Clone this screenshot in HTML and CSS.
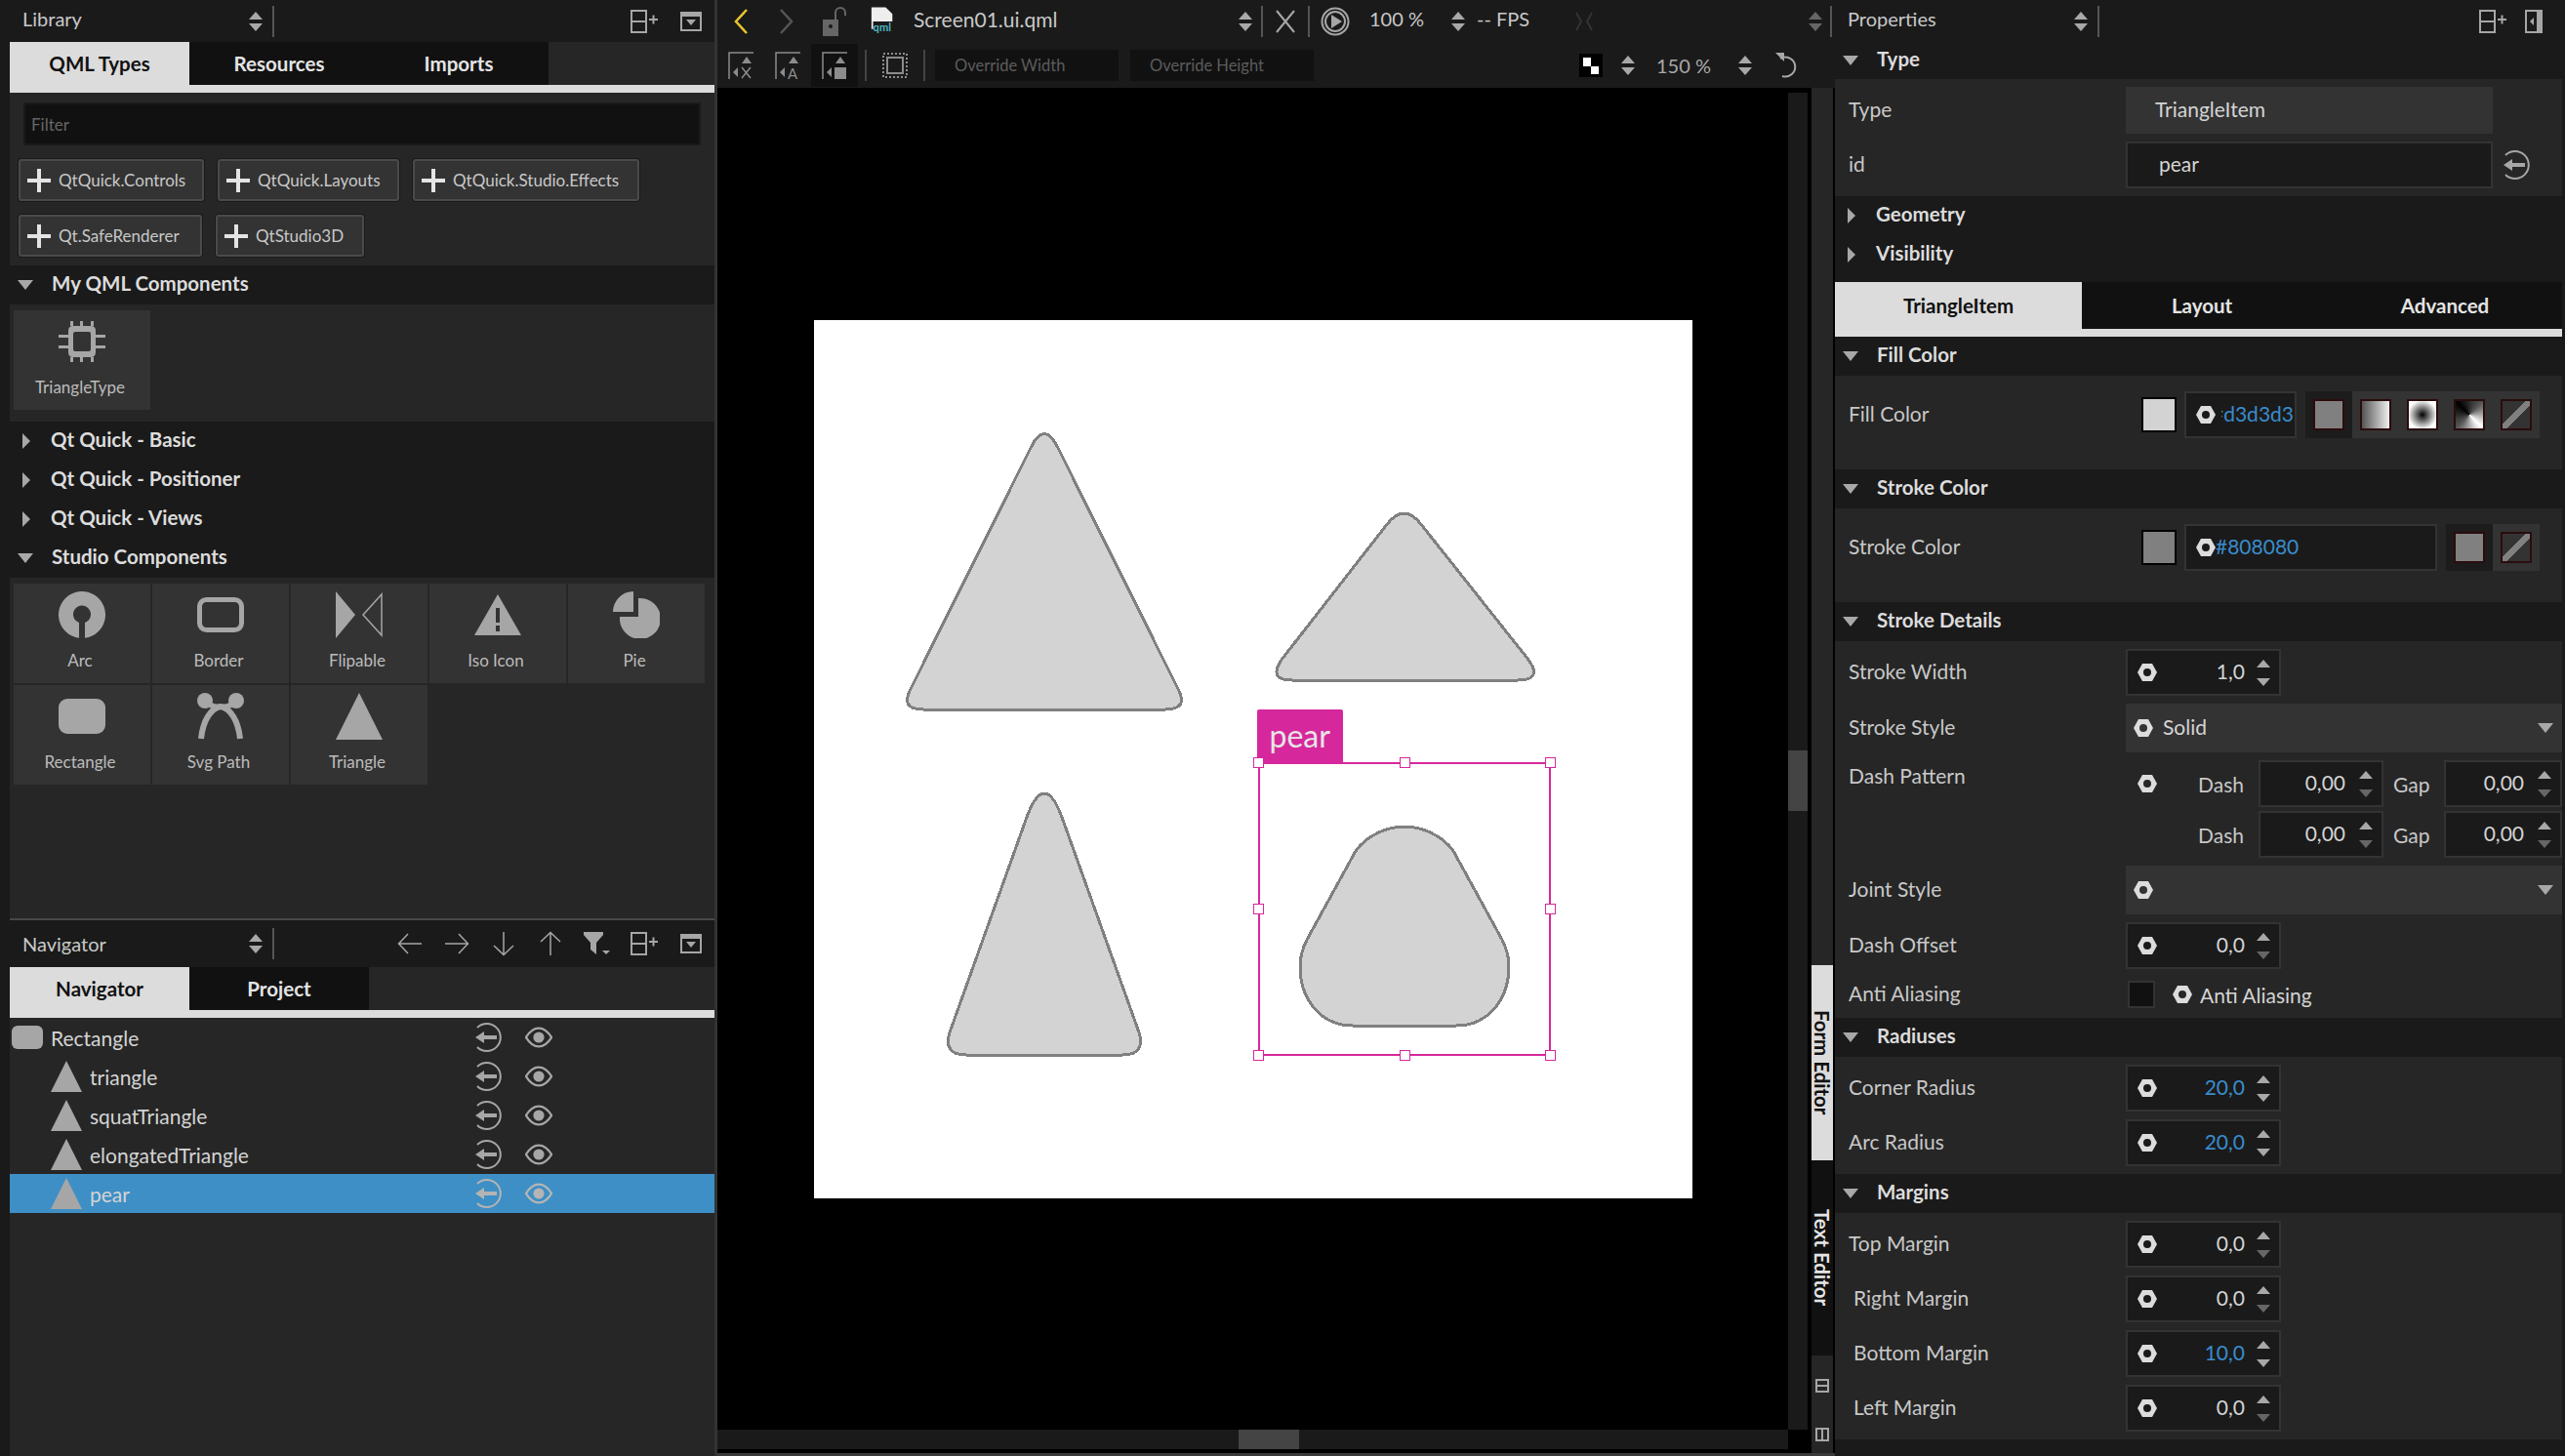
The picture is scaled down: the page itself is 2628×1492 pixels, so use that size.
FILE: index.html
```html
<!DOCTYPE html>
<html lang="en">

<head>
  <meta charset="UTF-8">
  <title>Qt Design Studio - Screen01.ui.qml</title>
  <link rel="stylesheet" href="styles.css">
</head>

<body>
  <svg class="sprite" xmlns="http://www.w3.org/2000/svg">
    <symbol id="updown" viewBox="0 0 14 20"><path d="M7 0l7 8H0zM0 12h14l-7 8z" /></symbol>
    <symbol id="caret-down" viewBox="0 0 16 10"><path d="M0 0h16L8 10z" /></symbol>
    <symbol id="caret-right" viewBox="0 0 10 16"><path d="M1 0l8 8-8 8z" /></symbol>
    <symbol id="split" viewBox="0 0 30 24"><path d="M2 1h15v22H2zM2 12h15M20 10h9M24.500 5.500v9" fill="none" stroke="currentColor" stroke-width="2" /></symbol>
    <symbol id="close-panel" viewBox="0 0 22 20"><path d="M1 1h20v18H1z" fill="none" stroke="currentColor" stroke-width="2" /><path d="M1 1h20v4H1zM6 8h10l-5 6z" /></symbol>
    <symbol id="collapse-panel" viewBox="0 0 18 24"><path d="M1 1h16v22H1z" fill="none" stroke="currentColor" stroke-width="2" /><path d="M12 1h5v22h-5zM9 8v8l-4-4z" /></symbol>
    <symbol id="plus" viewBox="0 0 24 24"><path d="M10 0h4v10h10v4H14v10h-4V14H0v-4h10z" /></symbol>
    <symbol id="hex" viewBox="0 0 20 20"><path fill-rule="evenodd" d="M5 1h10l5 9-5 9H5l-5-9zM10 6a4 4 0 1 0 0 8 4 4 0 0 0 0-8z" /></symbol>
    <symbol id="back" viewBox="0 0 32 32"><path d="M5 6A14 14 0 1 1 5 26" fill="none" stroke="currentColor" stroke-width="2" /><path d="M3 16l9-6v4h13v4H12v4z" /></symbol>
    <symbol id="eye" viewBox="0 0 30 24"><path d="M1 12C6 4 11 2 15 2s9 2 14 10c-5 8-10 10-14 10S6 20 1 12z" fill="none" stroke="currentColor" stroke-width="2.500" /><circle cx="15" cy="12" r="6" /></symbol>
    <symbol id="arrow-left" viewBox="0 0 26 22"><path d="M25 11H2M11 1L1.500 11 11 21" fill="none" stroke="currentColor" stroke-width="1.500" /></symbol>
    <symbol id="arrow-right" viewBox="0 0 26 22"><path d="M1 11h23M15 1l9.500 10L15 21" fill="none" stroke="currentColor" stroke-width="1.500" /></symbol>
    <symbol id="arrow-down" viewBox="0 0 22 26"><path d="M11 1v23M1 15l10 9.500L21 15" fill="none" stroke="currentColor" stroke-width="1.500" /></symbol>
    <symbol id="arrow-up" viewBox="0 0 22 26"><path d="M11 25V2M1 11L11 1.500 21 11" fill="none" stroke="currentColor" stroke-width="1.500" /></symbol>
    <symbol id="filter" viewBox="0 0 28 24"><path d="M0 0h20v3l-7 8v12l-6-5v-7L0 3zM19 19h8l-4 4z" /></symbol>
    <symbol id="chip" viewBox="0 0 48 42"><path fill-rule="evenodd" d="M15 5h18q5 0 5 5v22q0 5-5 5H15q-5 0-5-5V10q0-5 5-5zM17 11q-2 0-2 2v16q0 2 2 2h14q2 0 2-2V13q0-2-2-2z" /><path d="M12 0h3v5h-3zM22 0h3v5h-3zM33 0h3v5h-3zM12 37h3v5h-3zM22 37h3v5h-3zM33 37h3v5h-3zM0 14h10v3H0zM0 25h10v3H0zM38 14h10v3H38zM38 25h10v3H38z" /></symbol>
    <symbol id="arc" viewBox="0 0 48 48"><path fill-rule="evenodd" d="M21 47.800A24 24 0 1 1 27 47.800V32A9 9 0 1 0 21 32z" /></symbol>
    <symbol id="border" viewBox="0 0 48 36"><rect x="2.500" y="2.500" width="43" height="31" rx="7" fill="none" stroke="currentColor" stroke-width="5" /></symbol>
    <symbol id="flipable" viewBox="0 0 48 48"><path d="M0 0l20 24L0 48z" /><path d="M47 3v42L28 24z" fill="#333" stroke="currentColor" stroke-width="1.500" /></symbol>
    <symbol id="iso" viewBox="0 0 48 42"><path fill-rule="evenodd" d="M24 0l24 42H0zM22 14v15h4V14zM22 32v6h4v-6z" /></symbol>
    <symbol id="pie" viewBox="0 0 48 48"><path d="M21 0v21H0A21 21 0 0 1 21 0zM26 7a21 21 0 1 1-19 19h19z" /></symbol>
    <symbol id="rect" viewBox="0 0 48 36"><rect width="48" height="36" rx="9" /></symbol>
    <symbol id="svg-path" viewBox="0 0 48 48"><circle cx="8" cy="8" r="8" /><circle cx="40" cy="8" r="8" /><path d="M4 47C6 28 14 16 24 14c10 2 18 14 20 33M8 8q8 8 16 6 8 2 16-6" fill="none" stroke="currentColor" stroke-width="6" /></symbol>
    <symbol id="triangle" viewBox="0 0 48 48"><path d="M24 0l24 48H0z" /></symbol>
    <symbol id="resize-base" viewBox="0 0 26 28"><path d="M1 28V1h25" fill="none" stroke="currentColor" stroke-width="1.500" /><path d="M19 5l5 7H14zM10 16v10l-5-5z" /></symbol>
    <symbol id="undo" viewBox="0 0 22 26"><path d="M5 6a10 10 0 1 1 2 18" fill="none" stroke="currentColor" stroke-width="2" /><path d="M0 0h9v9z" /></symbol>
    <symbol id="play" viewBox="0 0 30 30"><circle cx="15" cy="15" r="13.500" fill="none" stroke="currentColor" stroke-width="2" /><circle cx="15" cy="15" r="10" fill="none" stroke="currentColor" stroke-width="2" /><path d="M11 8l11 7-11 7z" /></symbol>
    <symbol id="lock" viewBox="0 0 24 30"><path d="M0 13h16v17H0z" /><path d="M13 13V6a5 5 0 0 1 10 0v3" fill="none" stroke="currentColor" stroke-width="2" /><circle cx="8" cy="20" r="2" fill="#1a1a1a" /></symbol>
  </svg>

  <div class="app">

    <aside class="left">
      <section class="library">
        <header class="panel-head">
          <span class="panel-title">Library</span>
          <svg class="updown"><use href="#updown" /></svg>
          <span class="head-sep"></span>
          <span class="head-tools">
            <span class="hdr-btn"><svg class="i-split"><use href="#split" /></svg></span>
            <span class="hdr-btn"><svg class="i-close"><use href="#close-panel" /></svg></span>
          </span>
        </header>
        <nav class="tabs">
          <span class="tab active">QML Types</span>
          <span class="tab">Resources</span>
          <span class="tab">Imports</span>
        </nav>
        <div class="filter">Filter</div>
        <div class="import-row">
          <span class="import w190"><svg class="i-plus"><use href="#plus" /></svg>QtQuick.Controls</span>
          <span class="import w186"><svg class="i-plus"><use href="#plus" /></svg>QtQuick.Layouts</span>
          <span class="import w232"><svg class="i-plus"><use href="#plus" /></svg>QtQuick.Studio.Effects</span>
        </div>
        <div class="import-row">
          <span class="import w188"><svg class="i-plus"><use href="#plus" /></svg>Qt.SafeRenderer</span>
          <span class="import w152"><svg class="i-plus"><use href="#plus" /></svg>QtStudio3D</span>
        </div>

        <div class="section lib-first"><svg class="caret-d"><use href="#caret-down" /></svg>My QML Components</div>
        <div class="item-grid">
          <div class="item"><span class="item-icon"><svg class="i-chip"><use href="#chip" /></svg></span>TriangleType</div>
        </div>
        <div class="section"><svg class="caret-r"><use href="#caret-right" /></svg>Qt Quick - Basic</div>
        <div class="section"><svg class="caret-r"><use href="#caret-right" /></svg>Qt Quick - Positioner</div>
        <div class="section"><svg class="caret-r"><use href="#caret-right" /></svg>Qt Quick - Views</div>
        <div class="section"><svg class="caret-d"><use href="#caret-down" /></svg>Studio Components</div>
        <div class="item-grid">
          <div class="item"><span class="item-icon"><svg class="i-48"><use href="#arc" /></svg></span>Arc</div>
          <div class="item"><span class="item-icon"><svg class="i-wide"><use href="#border" /></svg></span>Border</div>
          <div class="item"><span class="item-icon"><svg class="i-48"><use href="#flipable" /></svg></span>Flipable</div>
          <div class="item"><span class="item-icon"><svg class="i-iso"><use href="#iso" /></svg></span>Iso Icon</div>
          <div class="item"><span class="item-icon"><svg class="i-48"><use href="#pie" /></svg></span>Pie</div>
          <div class="item"><span class="item-icon"><svg class="i-wide"><use href="#rect" /></svg></span>Rectangle</div>
          <div class="item"><span class="item-icon"><svg class="i-48"><use href="#svg-path" /></svg></span>Svg Path</div>
          <div class="item"><span class="item-icon"><svg class="i-48"><use href="#triangle" /></svg></span>Triangle</div>
        </div>
      </section>

      <section class="navigator">
        <header class="panel-head nav-head">
          <span class="panel-title">Navigator</span>
          <svg class="updown"><use href="#updown" /></svg>
          <span class="head-sep"></span>
          <span class="head-tools">
            <span class="hdr-btn"><svg class="i-arrow-h"><use href="#arrow-left" /></svg></span>
            <span class="hdr-btn"><svg class="i-arrow-h"><use href="#arrow-right" /></svg></span>
            <span class="hdr-btn"><svg class="i-arrow-v"><use href="#arrow-down" /></svg></span>
            <span class="hdr-btn"><svg class="i-arrow-v"><use href="#arrow-up" /></svg></span>
            <span class="hdr-btn"><svg class="i-filter"><use href="#filter" /></svg></span>
            <span class="hdr-btn"><svg class="i-split"><use href="#split" /></svg></span>
            <span class="hdr-btn"><svg class="i-close"><use href="#close-panel" /></svg></span>
          </span>
        </header>
        <nav class="tabs">
          <span class="tab active">Navigator</span>
          <span class="tab">Project</span>
        </nav>
        <div class="tree">
          <div class="tree-row">
            <span class="tree-name root"><svg class="i-tree-rect"><use href="#rect" /></svg>Rectangle</span>
            <svg class="i-back"><use href="#back" /></svg><svg class="i-eye"><use href="#eye" /></svg>
          </div>
          <div class="tree-row">
            <span class="tree-name"><svg class="i-tree-tri"><use href="#triangle" /></svg>triangle</span>
            <svg class="i-back"><use href="#back" /></svg><svg class="i-eye"><use href="#eye" /></svg>
          </div>
          <div class="tree-row">
            <span class="tree-name"><svg class="i-tree-tri"><use href="#triangle" /></svg>squatTriangle</span>
            <svg class="i-back"><use href="#back" /></svg><svg class="i-eye"><use href="#eye" /></svg>
          </div>
          <div class="tree-row">
            <span class="tree-name"><svg class="i-tree-tri"><use href="#triangle" /></svg>elongatedTriangle</span>
            <svg class="i-back"><use href="#back" /></svg><svg class="i-eye"><use href="#eye" /></svg>
          </div>
          <div class="tree-row selected">
            <span class="tree-name"><svg class="i-tree-tri"><use href="#triangle" /></svg>pear</span>
            <svg class="i-back"><use href="#back" /></svg><svg class="i-eye"><use href="#eye" /></svg>
          </div>
        </div>
      </section>
    </aside>

    <main class="center">
      <div class="doc-bar">
        <svg class="i-chev yellow" viewBox="0 0 16 28"><path d="M14 2L3 14l11 12" fill="none" stroke="currentColor" stroke-width="2.500" /></svg>
        <svg class="i-chev dim" viewBox="0 0 16 28"><path d="M2 2l11 12L2 26" fill="none" stroke="currentColor" stroke-width="2.500" /></svg>
        <svg class="i-lock"><use href="#lock" /></svg>
        <svg class="i-file" viewBox="0 0 28 34"><path d="M1 0h17l8 8v18H1z" fill="#eee" /><rect x="3" y="17" width="25" height="15" fill="#1a1a1a" /><text x="3" y="29" class="file-text">qml</text></svg>
        <span class="doc-name">Screen01.ui.qml</span>
        <svg class="updown"><use href="#updown" /></svg>
        <span class="bar-sep"></span>
        <svg class="i-x" viewBox="0 0 20 24"><path d="M1 1l18 22M19 1L1 23" fill="none" stroke="currentColor" stroke-width="2" /></svg>
        <span class="bar-sep"></span>
        <svg class="i-play"><use href="#play" /></svg>
        <span class="bar-text">100 %</span>
        <svg class="updown"><use href="#updown" /></svg>
        <span class="bar-text fps">-- FPS</span>
        <svg class="i-skip" viewBox="0 0 18 20"><path d="M1 1l5 9-5 9M17 1l-5 9 5 9" fill="none" stroke="currentColor" stroke-width="2" /></svg>
        <span></span>
        <svg class="updown faint"><use href="#updown" /></svg>
        <span class="bar-sep"></span>
      </div>

      <div class="form-bar">
        <span class="tool"><svg class="i-resize" viewBox="0 0 26 28"><use href="#resize-base" /><path d="M14 16l9 11M23 16l-9 11" fill="none" stroke="currentColor" stroke-width="1.500" /></svg></span>
        <span class="tool"><svg class="i-resize" viewBox="0 0 26 28"><use href="#resize-base" /><text x="13" y="28" class="glyph">A</text></svg></span>
        <span class="tool on"><svg class="i-resize" viewBox="0 0 26 28"><use href="#resize-base" /><path d="M13 16h12v12H13z" /></svg></span>
        <span class="bar-sep"></span>
        <span class="tool"><svg class="i-frame" viewBox="0 0 26 26"><path d="M5 5h16v16H5z" fill="none" stroke="currentColor" stroke-width="2" /><path d="M1 1h24v24H1z" fill="none" stroke="currentColor" stroke-width="2" stroke-dasharray="2 2" /></svg></span>
        <span class="bar-sep"></span>
        <span></span>
        <span class="override">Override Width</span>
        <span></span>
        <span class="override">Override Height</span>
        <span></span>
        <svg class="i-checker" viewBox="0 0 24 24"><path d="M0 0h24v24H0z" fill="#000" /><path d="M4 4h8v9H4zM12 13h8v8h-8z" fill="#fff" /></svg>
        <span></span>
        <svg class="updown"><use href="#updown" /></svg>
        <span class="bar-text zoom-val">150 %</span>
        <svg class="updown"><use href="#updown" /></svg>
        <span></span>
        <svg class="i-undo"><use href="#undo" /></svg>
        <span></span>
      </div>

      <div class="work">
        <div class="canvas-col">
          <div class="canvas">
            <div class="page">
              <svg class="shapes" viewBox="0 0 900 900">
                <path d="M222 131Q236 102 250 131L373 378Q384 399 360 399H112Q88 399 99 378Z" />
                <path d="M586.500 210Q604.500 186 622.500 210L732 348Q747 369 721 369H490Q465 369 479 348Z" />
                <path d="M216 515Q236 455 256 515L333 730Q340 753 316 753H156Q132 753 139 730Z" />
                <path d="M555 544C568 526 590 519 605 519C620 519 642 526 655 544L705 635C710 645 712 654 712 662C712 697 690 723 658 723H552C520 723 498 697 498 662C498 654 500 645 505 635Z" />
              </svg>
              <div class="sel-label">pear</div>
              <div class="sel-box">
                <span class="handle tl"></span><span class="handle tc"></span><span class="handle tr"></span>
                <span class="handle ml"></span><span class="handle mr"></span>
                <span class="handle bl"></span><span class="handle bc"></span><span class="handle br"></span>
              </div>
            </div>
          </div>
          <div class="hscroll"><span class="thumb-h"></span></div>
        </div>
        <div class="vscroll"><span class="thumb-v"></span></div>
        <div class="mode-col">
          <span class="mode active">Form Editor</span>
          <span class="mode">Text Editor</span>
          <span class="mode-icons">
            <svg class="i-mode" viewBox="0 0 14 14"><path d="M1 1h12v12H1zM1 7h12" fill="none" stroke="currentColor" stroke-width="2" /></svg>
            <svg class="i-mode" viewBox="0 0 14 14"><path d="M1 1h12v12H1zM7 1v12" fill="none" stroke="currentColor" stroke-width="2" /></svg>
          </span>
        </div>
      </div>
      <div class="status-line"></div>
    </main>

    <aside class="right">
      <header class="panel-head props-head">
        <span class="panel-title">Properties</span>
        <svg class="updown"><use href="#updown" /></svg>
        <span class="head-sep"></span>
        <span class="head-tools">
          <span class="hdr-btn"><svg class="i-split"><use href="#split" /></svg></span>
          <span class="hdr-btn"><svg class="i-collapse"><use href="#collapse-panel" /></svg></span>
        </span>
      </header>
      <div class="section type-section"><svg class="caret-d"><use href="#caret-down" /></svg>Type</div>
      <div class="props">
        <div class="prop"><label>Type</label><span class="readonly">TriangleItem</span></div>
        <div class="prop"><label>id</label><span class="id-wrap"><span class="id-input">pear</span><svg class="i-back"><use href="#back" /></svg></span></div>
      </div>
      <div class="section"><svg class="caret-r"><use href="#caret-right" /></svg>Geometry</div>
      <div class="section"><svg class="caret-r"><use href="#caret-right" /></svg>Visibility</div>

      <nav class="tabs prop-tabs">
        <span class="tab active">TriangleItem</span>
        <span class="tab layout-tab">Layout</span>
        <span class="tab advanced-tab">Advanced</span>
      </nav>

      <div class="section"><svg class="caret-d"><use href="#caret-down" /></svg>Fill Color</div>
      <div class="props color-props">
        <div class="prop">
          <label>Fill Color</label>
          <span class="color-line">
            <span class="swatch light"></span>
            <span class="hex short"><svg class="i-hex"><use href="#hex" /></svg><span class="hex-val clip">#d3d3d3</span></span>
            <span class="fill-btns">
              <span class="fill-slot on"><span class="fill solid"></span></span>
              <span class="fill-slot"><span class="fill linear"></span></span>
              <span class="fill-slot"><span class="fill radial"></span></span>
              <span class="fill-slot"><span class="fill conical"></span></span>
              <span class="fill-slot"><span class="fill none"></span></span>
            </span>
          </span>
        </div>
      </div>

      <div class="section"><svg class="caret-d"><use href="#caret-down" /></svg>Stroke Color</div>
      <div class="props color-props">
        <div class="prop">
          <label>Stroke Color</label>
          <span class="color-line">
            <span class="swatch gray"></span>
            <span class="hex long"><svg class="i-hex"><use href="#hex" /></svg><span class="hex-val">#808080</span></span>
            <span class="fill-btns">
              <span class="fill-slot on"><span class="fill solid"></span></span>
              <span class="fill-slot"><span class="fill none"></span></span>
            </span>
          </span>
        </div>
      </div>

      <div class="section"><svg class="caret-d"><use href="#caret-down" /></svg>Stroke Details</div>
      <div class="props">
        <div class="prop"><label>Stroke Width</label><span class="spin"><svg class="i-hex"><use href="#hex" /></svg><span class="val">1,0</span><span class="spin-btns"><i class="up"></i><i class="down"></i></span></span></div>
        <div class="prop combo-row"><label>Stroke Style</label><span class="combo"><svg class="i-hex"><use href="#hex" /></svg><span class="combo-val">Solid</span><svg class="combo-caret"><use href="#caret-down" /></svg></span></div>
        <div class="prop dash-prop">
          <label>Dash Pattern</label>
          <span class="dash-wrap">
            <svg class="i-hex"><use href="#hex" /></svg>
            <span class="dash-grid">
              <span class="dash-label">Dash</span><span class="spin small"><span class="val">0,00</span><span class="spin-btns"><i class="up"></i><i class="down dim"></i></span></span>
              <span class="gap-label">Gap</span><span class="spin small"><span class="val">0,00</span><span class="spin-btns"><i class="up"></i><i class="down dim"></i></span></span>
              <span class="dash-label">Dash</span><span class="spin small"><span class="val">0,00</span><span class="spin-btns"><i class="up"></i><i class="down dim"></i></span></span>
              <span class="gap-label">Gap</span><span class="spin small"><span class="val">0,00</span><span class="spin-btns"><i class="up"></i><i class="down dim"></i></span></span>
            </span>
          </span>
        </div>
        <div class="prop combo-row"><label>Joint Style</label><span class="combo"><svg class="i-hex"><use href="#hex" /></svg><span class="combo-val"></span><svg class="combo-caret"><use href="#caret-down" /></svg></span></div>
        <div class="prop"><label>Dash Offset</label><span class="spin"><svg class="i-hex"><use href="#hex" /></svg><span class="val">0,0</span><span class="spin-btns"><i class="up"></i><i class="down dim"></i></span></span></div>
        <div class="prop check-row"><label>Anti Aliasing</label><span class="check-wrap"><span class="check"></span><svg class="i-hex"><use href="#hex" /></svg>Anti Aliasing</span></div>
      </div>

      <div class="section"><svg class="caret-d"><use href="#caret-down" /></svg>Radiuses</div>
      <div class="props">
        <div class="prop"><label>Corner Radius</label><span class="spin"><svg class="i-hex"><use href="#hex" /></svg><span class="val blue">20,0</span><span class="spin-btns"><i class="up"></i><i class="down"></i></span></span></div>
        <div class="prop"><label>Arc Radius</label><span class="spin"><svg class="i-hex"><use href="#hex" /></svg><span class="val blue">20,0</span><span class="spin-btns"><i class="up"></i><i class="down"></i></span></span></div>
      </div>

      <div class="section"><svg class="caret-d"><use href="#caret-down" /></svg>Margins</div>
      <div class="props">
        <div class="prop"><label>Top Margin</label><span class="spin"><svg class="i-hex"><use href="#hex" /></svg><span class="val">0,0</span><span class="spin-btns"><i class="up"></i><i class="down dim"></i></span></span></div>
        <div class="prop"><label class="indent">Right Margin</label><span class="spin"><svg class="i-hex"><use href="#hex" /></svg><span class="val">0,0</span><span class="spin-btns"><i class="up"></i><i class="down dim"></i></span></span></div>
        <div class="prop"><label class="indent">Bottom Margin</label><span class="spin"><svg class="i-hex"><use href="#hex" /></svg><span class="val blue">10,0</span><span class="spin-btns"><i class="up"></i><i class="down"></i></span></span></div>
        <div class="prop"><label class="indent">Left Margin</label><span class="spin"><svg class="i-hex"><use href="#hex" /></svg><span class="val">0,0</span><span class="spin-btns"><i class="up"></i><i class="down dim"></i></span></span></div>
      </div>
    </aside>

  </div>
</body>

</html>
```

FILE: styles.css
```css
* {
  box-sizing: border-box;
}

html,
body {
  margin: 0;
  height: 100%;
  overflow: hidden;
}

body {
  background-color: #1a1a1a;
  color: #d4d4d4;
  font-family: Lato, "Open Sans", sans-serif;
  font-size: 21px;
}

svg {
  fill: currentColor;
  flex: none;
}

.sprite {
  display: none;
}

.app {
  display: flex;
  width: 2628px;
  height: 1492px;
}

/* panels */

.left {
  display: flex;
  flex-direction: column;
  width: 732px;
  padding-left: 10px;
  background-color: #1a1a1a;
}

.library {
  flex: 1;
  background-color: #262626;
}

.navigator {
  height: 551px;
  background-color: #262626;
  border-top: 2px solid #484848;
}

.panel-head {
  display: flex;
  align-items: center;
  height: 43px;
  padding-left: 13px;
  background-color: #1a1a1a;
}

.nav-head {
  height: 48px;
}

.panel-title {
  width: 232px;
  padding-bottom: 6px;
  color: #c8c8c8;
  font-size: 20px;
}

.nav-head .panel-title {
  padding-bottom: 0;
}

.updown {
  width: 14px;
  height: 20px;
  color: #a8a8a8;
}

.head-sep {
  width: 2px;
  height: 32px;
  margin-left: 10px;
  background-color: #555;
}

.head-tools {
  display: flex;
  margin-left: auto;
  color: #a6a6a6;
}

.hdr-btn {
  display: flex;
  justify-content: center;
  align-items: center;
  width: 48px;
  height: 36px;
}

.i-split {
  width: 30px;
  height: 24px;
}

.i-close {
  width: 22px;
  height: 20px;
}

.i-collapse {
  width: 18px;
  height: 24px;
}

.i-arrow-h {
  width: 26px;
  height: 22px;
}

.i-arrow-v {
  width: 22px;
  height: 26px;
}

.i-filter {
  width: 28px;
  height: 24px;
}

/* tabs */

.tabs {
  display: flex;
  height: 52px;
  border-bottom: 8px solid #dcdcdc;
  background-color: #262626;
}

.tab {
  display: flex;
  flex: none;
  justify-content: center;
  align-items: center;
  width: 184px;
  background-color: #111;
  color: #e4e4e4;
  font-size: 20.500px;
  font-weight: 700;
}

.tab.active {
  background-color: #dcdcdc;
  color: #111;
}

.prop-tabs {
  margin-top: 8px;
  height: 56px;
  background-color: #111;
}

.prop-tabs .tab.active {
  width: 253px;
}

.prop-tabs .layout-tab {
  width: 246px;
}

.prop-tabs .advanced-tab {
  width: 246px;
  padding-left: 6px;
}

/* library */

.filter {
  display: flex;
  align-items: center;
  height: 44px;
  margin: 10px 14px 0;
  padding-left: 6px;
  background-color: #111;
  border: 2px solid #1a1a1a;
  color: #666;
  font-size: 17px;
}

.import-row {
  display: flex;
  gap: 14px;
  margin-top: 14px;
  padding-left: 9px;
}

.import {
  display: flex;
  align-items: center;
  gap: 8px;
  height: 43px;
  padding-left: 7px;
  background-color: #333;
  border: 2px solid #4a4a4a;
  border-radius: 3px;
  box-shadow: 0 0 0 1px #1a1a1a;
  color: #c8c8c8;
  font-size: 17px;
}

.w190 { width: 190px; }
.w186 { width: 186px; }
.w232 { width: 232px; }
.w188 { width: 188px; }
.w152 { width: 152px; }

.i-plus {
  width: 24px;
  height: 24px;
  color: #e4e4e4;
}

.section {
  display: flex;
  align-items: center;
  height: 40px;
  padding-bottom: 5px;
  background-color: #1a1a1a;
  color: #dcdcdc;
  font-size: 20.500px;
  font-weight: 700;
}

.lib-first {
  margin-top: 9px;
}

.caret-d {
  width: 16px;
  height: 10px;
  margin: 5px 19px 0 8px;
  color: #a8a8a8;
}

.caret-r {
  width: 10px;
  height: 16px;
  margin: 5px 20px 0 12px;
  color: #a8a8a8;
}

.item-grid {
  display: grid;
  grid-template-columns: repeat(5, 140px);
  gap: 2px;
  padding: 6px 4px 12px;
}

.item {
  display: flex;
  flex-direction: column;
  align-items: center;
  height: 102px;
  padding-top: 8px;
  padding-right: 4px;
  background-color: #333;
  color: #bcbcbc;
  font-size: 17px;
}

.item-icon {
  display: flex;
  justify-content: center;
  align-items: center;
  height: 48px;
  margin-bottom: 12px;
  margin-right: -4px;
  color: #a6a6a6;
}

.i-chip {
  width: 48px;
  height: 42px;
}

.i-48 {
  width: 48px;
  height: 48px;
}

.i-wide {
  width: 48px;
  height: 36px;
}

.i-iso {
  width: 48px;
  height: 42px;
}

/* navigator */

.tree-row {
  display: grid;
  grid-template-columns: 464px 52px 52px 1fr;
  align-items: center;
  height: 40px;
  color: #d4d4d4;
}

.tree-row .i-back,
.tree-row .i-eye {
  justify-self: center;
  color: #a6a6a6;
}

.tree-row.selected {
  background-color: #3e8fc5;
}

.tree-row.selected .i-back,
.tree-row.selected .i-eye {
  color: #b4b4b4;
}

.tree-name {
  display: flex;
  align-items: center;
  padding-left: 42px;
}

.tree-name.root {
  padding-left: 2px;
}

.i-tree-rect {
  width: 32px;
  height: 24px;
  margin-right: 8px;
  color: #a6a6a6;
}

.i-tree-tri {
  width: 32px;
  height: 32px;
  margin-right: 8px;
  color: #a6a6a6;
}

.i-back {
  width: 32px;
  height: 32px;
  color: #a6a6a6;
}

.i-eye {
  width: 28px;
  height: 24px;
}

/* center */

.center {
  display: flex;
  flex-direction: column;
  width: 1148px;
  border-left: 3px solid #333;
  background-color: #000;
}

.doc-bar,
.form-bar {
  display: grid;
  align-items: center;
  justify-items: center;
  background-color: #1a1a1a;
}

.doc-bar {
  grid-template-columns: 47px 48px 50px 48px 337px 22px 12px 36px 12px 42px 94px 22px 105px 26px 1fr 22px 9px;
  height: 43px;
}

.form-bar {
  grid-template-columns: 48px 48px 48px 16px 44px 16px 3px 188px 12px 188px 1fr 24px 15px 22px 98px 22px 11px 40px 30px;
  height: 47px;
}

.bar-sep {
  width: 2px;
  height: 32px;
  background-color: #555;
}

.form-bar .bar-sep {
  background-color: #444;
}

.doc-bar .updown.faint {
  color: #666;
}

.i-chev {
  width: 16px;
  height: 28px;
}

.yellow {
  color: #e8c430;
}

.dim {
  color: #555;
}

.i-lock {
  width: 24px;
  height: 30px;
  color: #666;
}

.i-file {
  width: 24px;
  height: 30px;
}

.file-text {
  fill: #4fb8c4;
  font-size: 13px;
  font-weight: 700;
}

.doc-name {
  justify-self: start;
  padding: 0 0 5px 8px;
  color: #c8c8c8;
}

.i-x {
  width: 20px;
  height: 24px;
  color: #a6a6a6;
}

.i-play {
  width: 30px;
  height: 30px;
  color: #a6a6a6;
}

.bar-text {
  justify-self: start;
  padding: 0 0 5px 14px;
  color: #c8c8c8;
  font-size: 20px;
}

.fps {
  padding-left: 8px;
}

.zoom-val {
  padding: 0 0 0 18px;
  color: #a8a8a8;
}

.i-skip {
  width: 18px;
  height: 20px;
  color: #333;
}

.tool {
  display: flex;
  justify-content: center;
  align-items: center;
  width: 48px;
  height: 44px;
  color: #8c8c8c;
}

.tool.on {
  background-color: #111;
}

.i-resize {
  width: 26px;
  height: 28px;
}

.glyph {
  fill: #8c8c8c;
  font-size: 15px;
}

.i-frame {
  width: 26px;
  height: 26px;
}

.override {
  display: flex;
  align-items: center;
  width: 188px;
  height: 32px;
  padding-left: 20px;
  background-color: #111;
  color: #5c5c5c;
  font-size: 16.500px;
}

.i-checker {
  width: 24px;
  height: 24px;
}

.i-undo {
  width: 22px;
  height: 26px;
  color: #a8a8a8;
}

.work {
  display: flex;
  flex: 1;
  min-height: 0;
}

.canvas-col {
  display: flex;
  flex-direction: column;
  width: 1097px;
}

.canvas {
  display: flex;
  flex: 1;
  justify-content: center;
  align-items: center;
}

.hscroll {
  display: flex;
  justify-content: center;
  height: 20px;
  margin-bottom: 4px;
  background-color: #1a1a1a;
}

.thumb-h {
  width: 62px;
  margin-left: 32px;
  background-color: #444;
}

.vscroll {
  width: 20px;
  margin: 5px 0 24px;
  padding-top: 674px;
  background-color: #1a1a1a;
}

.thumb-v {
  display: block;
  height: 62px;
  background-color: #444;
}

.mode-col {
  display: flex;
  flex-direction: column;
  width: 22px;
  margin-left: 4px;
  background-color: #262626;
}

.mode {
  display: flex;
  flex: none;
  justify-content: center;
  align-items: center;
  height: 200px;
  background-color: #111;
  color: #e4e4e4;
  font-size: 20.500px;
  font-weight: 700;
  line-height: 22px;
  writing-mode: vertical-rl;
}

.mode.active {
  margin-top: 899px;
  background-color: #dcdcdc;
  color: #111;
}

.mode-icons {
  display: flex;
  flex-direction: column;
  align-items: center;
  gap: 36px;
  padding-top: 24px;
  color: #a6a6a6;
}

.i-mode {
  width: 14px;
  height: 14px;
}

.status-line {
  height: 3px;
  background-color: #3a3a3a;
}

/* the free canvas */

.page {
  position: relative;
  width: 900px;
  height: 900px;
  background-color: #fff;
}

.shapes {
  display: block;
  width: 900px;
  height: 900px;
  fill: #d3d3d3;
  stroke: #808080;
  stroke-width: 3;
  shape-rendering: crispEdges;
}

.sel-label {
  position: absolute;
  left: 454px;
  top: 399px;
  width: 88px;
  height: 56px;
  padding: 7px 0 0 13px;
  background-color: #d6289c;
  border-radius: 2px 2px 0 0;
  color: #e6e6e6;
  font-size: 32px;
}

.sel-box {
  position: absolute;
  left: 455px;
  top: 453px;
  width: 300px;
  height: 301px;
  border: 2px solid #d6289c;
}

.handle {
  position: absolute;
  width: 11px;
  height: 11px;
  background-color: #fff;
  border: 1.500px solid #d6289c;
}

.tl { left: -7px; top: -7px; }
.tc { left: 143px; top: -7px; }
.tr { right: -7px; top: -7px; }
.ml { left: -7px; top: 143px; }
.mr { right: -7px; top: 143px; }
.bl { left: -7px; bottom: -7px; }
.bc { left: 143px; bottom: -7px; }
.br { right: -7px; bottom: -7px; }

/* properties */

.right {
  width: 748px;
  padding-right: 3px;
  background-color: #1a1a1a;
}

.props-head {
  padding-right: 8px;
}

.props-head .hdr-btn {
  width: 42px;
}

.type-section {
  height: 38px;
}

.props {
  display: flex;
  flex-direction: column;
  gap: 8px;
  padding: 8px 0;
  background-color: #262626;
}

.color-props {
  padding: 16px 0 32px;
}

.prop {
  display: grid;
  grid-template-columns: 284px 1fr;
  align-items: center;
  min-height: 48px;
  padding-left: 14px;
}

.prop label {
  padding-bottom: 3px;
  color: #c8c8c8;
}

.prop label.indent {
  padding-left: 5px;
}

.readonly {
  display: flex;
  align-items: center;
  width: 376px;
  height: 48px;
  padding: 0 0 4px 30px;
  background-color: #333;
}

.id-wrap {
  display: flex;
  align-items: center;
  gap: 8px;
}

.id-input {
  display: flex;
  align-items: center;
  width: 376px;
  height: 48px;
  padding: 0 0 3px 32px;
  background-color: #1a1a1a;
  border: 2px solid #333;
}

.color-line {
  display: flex;
  align-items: center;
  padding-left: 16px;
}

.swatch {
  width: 36px;
  height: 36px;
  border: 2px solid #000;
}

.swatch.light {
  background-color: #d3d3d3;
}

.swatch.gray {
  background-color: #808080;
}

.hex {
  display: flex;
  align-items: center;
  height: 48px;
  margin-left: 8px;
  padding-left: 10px;
  background-color: #1a1a1a;
  border: 2px solid #333;
  overflow: hidden;
}

.hex.short {
  width: 115px;
}

.hex.long {
  width: 259px;
}

.i-hex {
  width: 20px;
  height: 20px;
  color: #dcdcdc;
}

.hex-val {
  padding-bottom: 3px;
  color: #3a8ccc;
}

.hex-val.clip {
  margin-left: -4px;
  clip-path: inset(0 0 0 10px);
}

.fill-btns {
  display: flex;
  height: 48px;
  margin-left: 9px;
  background-color: #333;
}

.fill-slot {
  display: flex;
  justify-content: center;
  align-items: center;
  width: 48px;
}

.fill-slot.on {
  background-color: #1c1c1c;
}

.fill {
  width: 32px;
  height: 32px;
  border: 2px solid #2a0c0c;
}

.fill.solid {
  background-color: #808080;
}

.fill.linear {
  background: linear-gradient(90deg, #555, #f0f0f0);
}

.fill.radial {
  background: radial-gradient(circle, #000, #fff 75%);
}

.fill.conical {
  background: conic-gradient(from 135deg, #fff, #555 25%, #000 50%, #555 75%, #fff);
}

.fill.none {
  background: linear-gradient(135deg, #333 42%, #808080 42%, #808080 58%, #333 58%);
}

.spin {
  display: flex;
  align-items: center;
  width: 159px;
  height: 48px;
  padding-left: 10px;
  background-color: #1a1a1a;
  border: 2px solid #333;
}

.spin.small {
  width: 128px;
  padding-left: 0;
}

.spin .val {
  flex: 1;
  padding: 0 5px 3px 0;
  color: #d4d4d4;
  text-align: right;
}

.spin.small .val {
  padding-right: 7px;
}

.spin .val.blue {
  color: #3a8ccc;
}

.spin-btns {
  display: flex;
  flex-direction: column;
  align-items: center;
  gap: 11px;
  width: 30px;
  padding-right: 3px;
}

.spin-btns i {
  width: 0;
  height: 0;
  border-left: 7px solid transparent;
  border-right: 7px solid transparent;
}

.spin-btns .up {
  border-bottom: 8px solid #a8a8a8;
}

.spin-btns .down {
  border-top: 8px solid #a8a8a8;
}

.spin-btns .down.dim {
  border-top-color: #666;
}

.combo {
  display: flex;
  align-items: center;
  width: 447px;
  height: 50px;
  padding: 0 9px 0 8px;
  background-color: #333;
}

.combo-val {
  flex: 1;
  padding: 0 0 4px 10px;
}

.combo-caret {
  width: 16px;
  height: 10px;
  color: #a8a8a8;
}

.dash-prop {
  align-items: start;
  min-height: 100px;
}

.dash-prop label {
  margin-top: 3px;
}

.dash-wrap {
  display: flex;
  align-items: flex-start;
  padding-left: 12px;
}

.dash-wrap .i-hex {
  margin-top: 14px;
}

.dash-grid {
  display: grid;
  grid-template-columns: 62px 128px 62px 121px;
  align-items: center;
  gap: 4px 0;
  margin-left: 42px;
  color: #c8c8c8;
}

.gap-label {
  padding-left: 10px;
}

.dash-grid .spin:nth-child(4),
.dash-grid .spin:nth-child(8) {
  width: 121px;
}

.check-row {
  min-height: 28px;
  margin: 4px 0 2px;
}

.check-wrap {
  display: flex;
  align-items: center;
  padding-left: 2px;
  gap: 8px;
}

.check {
  width: 28px;
  height: 28px;
  margin-right: 10px;
  background-color: #111;
  border: 2px solid #333;
}
```
